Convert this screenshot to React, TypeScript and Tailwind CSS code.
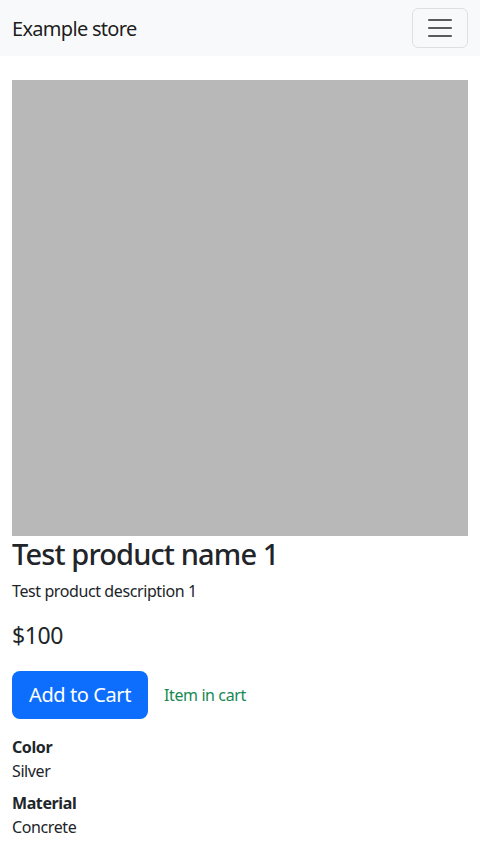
function MenuIcon() {
  return (
    <svg width="30" height="30" viewBox="0 0 30 30" aria-hidden="true">
      <path
        d="M4 7h22M4 15h22M4 23h22"
        stroke="rgba(33,37,41,0.75)"
        strokeWidth="2"
        strokeLinecap="round"
        strokeMiterlimit="10"
      />
    </svg>
  );
}

function App() {
  const details = [
    { label: "Color", value: "Silver" },
    { label: "Material", value: "Concrete" },
  ];

  return (
    <div className="min-h-screen bg-white font-['Noto_Sans',sans-serif] tracking-[-0.025em] text-[#212529]">
      <nav className="flex h-14 items-center justify-between bg-[#f8f9fa] px-3">
        <a href="#" className="pt-0.5 text-[20px] leading-[30px] tracking-[-0.035em] text-[rgba(0,0,0,0.9)]">
          Example store
        </a>
        <button className="flex h-[40px] w-[56px] items-center justify-center rounded-md border border-[rgba(0,0,0,0.1)]">
          <MenuIcon />
        </button>
      </nav>

      <main className="px-3 pt-6">
        <div className="aspect-square w-full bg-[#b8b8b8]" />
        <h1 className="mb-2 text-[29px] font-medium leading-[35px] tracking-[-0.03em]">
          Test product name 1
        </h1>
        <p className="mb-4 text-base leading-6">Test product description 1</p>
        <p className="mb-[19px] text-[23px] leading-[33px]">$100</p>

        <div className="mb-4 flex items-center gap-4">
          <button className="h-12 rounded-lg bg-[#0d6efd] px-[17px] text-[20px] text-white">
            Add to Cart
          </button>
          <span className="text-base text-[#198754]">Item in cart</span>
        </div>

        <dl>
          {details.map((d) => (
            <div key={d.label} className="mb-2 text-base leading-6">
              <dt className="font-bold">{d.label}</dt>
              <dd>{d.value}</dd>
            </div>
          ))}
        </dl>
      </main>
    </div>
  );
}

export default App;
